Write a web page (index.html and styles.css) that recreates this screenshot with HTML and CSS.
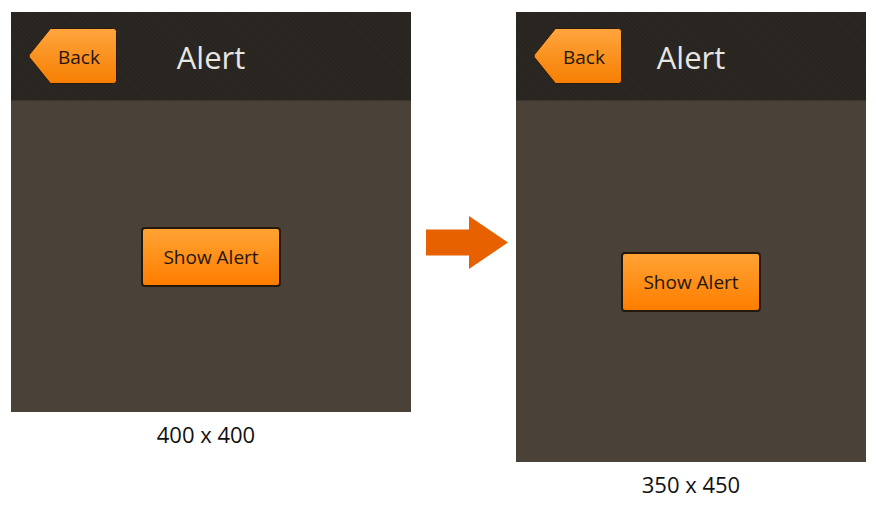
FILE: index.html
```html
<!DOCTYPE html>
<html>
<head>
<meta charset="utf-8">
<link rel="stylesheet" href="styles.css">
</head>
<body>
<div class="stage">
  <div class="col">
    <div class="panel panel-a">
      <div class="header">
        <div class="back">
          <svg class="back-shape" width="89" height="56" viewBox="0 0 89 56">
            <defs>
              <linearGradient id="ga" x1="0" y1="0" x2="0" y2="1">
                <stop offset="0" stop-color="#ffa53e"/>
                <stop offset="1" stop-color="#f67f02"/>
              </linearGradient>
            </defs>
            <path d="M22.5 0.5 H85.5 Q88.5 0.5 88.5 3.5 V52.5 Q88.5 55.5 85.5 55.5 H22.5 L1.5 29.5 Q0.5 28 1.5 26.5 Z" fill="url(#ga)" stroke="#2a1a0c" stroke-width="1"/>
          </svg>
          <span class="back-label">Back</span>
        </div>
        <div class="title">Alert</div>
      </div>
      <div class="content">
        <button class="show">Show Alert</button>
      </div>
    </div>
    <div class="caption caption-a">400 x 400</div>
  </div>

  <div class="arrow">
    <svg width="82" height="53" viewBox="0 0 82 53">
      <path d="M0 13.5 H43 V0 L82 26.5 L43 53 V39.5 H0 Z" fill="#e86100"/>
    </svg>
  </div>

  <div class="col">
    <div class="panel panel-b">
      <div class="header">
        <div class="back">
          <svg class="back-shape" width="89" height="56" viewBox="0 0 89 56">
            <defs>
              <linearGradient id="gb" x1="0" y1="0" x2="0" y2="1">
                <stop offset="0" stop-color="#ffa53e"/>
                <stop offset="1" stop-color="#f67f02"/>
              </linearGradient>
            </defs>
            <path d="M22.5 0.5 H85.5 Q88.5 0.5 88.5 3.5 V52.5 Q88.5 55.5 85.5 55.5 H22.5 L1.5 29.5 Q0.5 28 1.5 26.5 Z" fill="url(#gb)" stroke="#2a1a0c" stroke-width="1"/>
          </svg>
          <span class="back-label">Back</span>
        </div>
        <div class="title">Alert</div>
      </div>
      <div class="content">
        <button class="show">Show Alert</button>
      </div>
    </div>
    <div class="caption">350 x 450</div>
  </div>
</div>
</body>
</html>
```

FILE: styles.css
```css
html, body {
  margin: 0;
  padding: 0;
  background: #ffffff;
}

body {
  font-family: "Open Sans", "DejaVu Sans", sans-serif;
}

.stage {
  display: flex;
  align-items: flex-start;
  padding: 12px 0 0 11px;
}

.col {
  display: flex;
  flex-direction: column;
}

.panel {
  display: flex;
  flex-direction: column;
  background: #4a4238;
}

.panel-a {
  width: 400px;
  height: 400px;
}

.panel-b {
  width: 350px;
  height: 450px;
}

.header {
  height: 89px;
  flex: none;
  display: grid;
  grid-template-columns: 1fr auto 1fr;
  align-items: center;
  padding-left: 17px;
  padding-right: 17px;
  background-color: #282420;
  background-image: repeating-linear-gradient(45deg, rgba(255,255,255,0.02) 0 1px, rgba(0,0,0,0) 1px 3px);
  border-bottom: 1px solid #3a342d;
  box-sizing: border-box;
}

.back {
  position: relative;
  width: 89px;
  height: 56px;
  display: flex;
  align-items: center;
  justify-self: start;
}

.back-shape {
  position: absolute;
  left: 0;
  top: 0;
}

.back-label {
  position: relative;
  padding-left: 30px;
  padding-top: 2px;
  font-size: 19px;
  color: #24160a;
}

.title {
  grid-column: 2;
  font-size: 31px;
  color: #e8e6e3;
  line-height: 1;
  padding-top: 3px;
}

.content {
  flex: 1;
  display: flex;
  align-items: center;
  justify-content: center;
}

.show {
  width: 140px;
  height: 60px;
  border: 2px solid #24180c;
  border-radius: 4px;
  background: linear-gradient(#ffa334, #ff7d00);
  font-family: "Open Sans", "DejaVu Sans", sans-serif;
  font-size: 19px;
  color: #24160a;
  padding: 0;
}

.arrow {
  margin: 204px 8px 0 15px;
  display: flex;
}

.caption {
  margin-top: 7px;
  text-align: center;
  font-size: 22px;
  color: #111111;
}

.caption-a {
  padding-right: 10px;
}
```
